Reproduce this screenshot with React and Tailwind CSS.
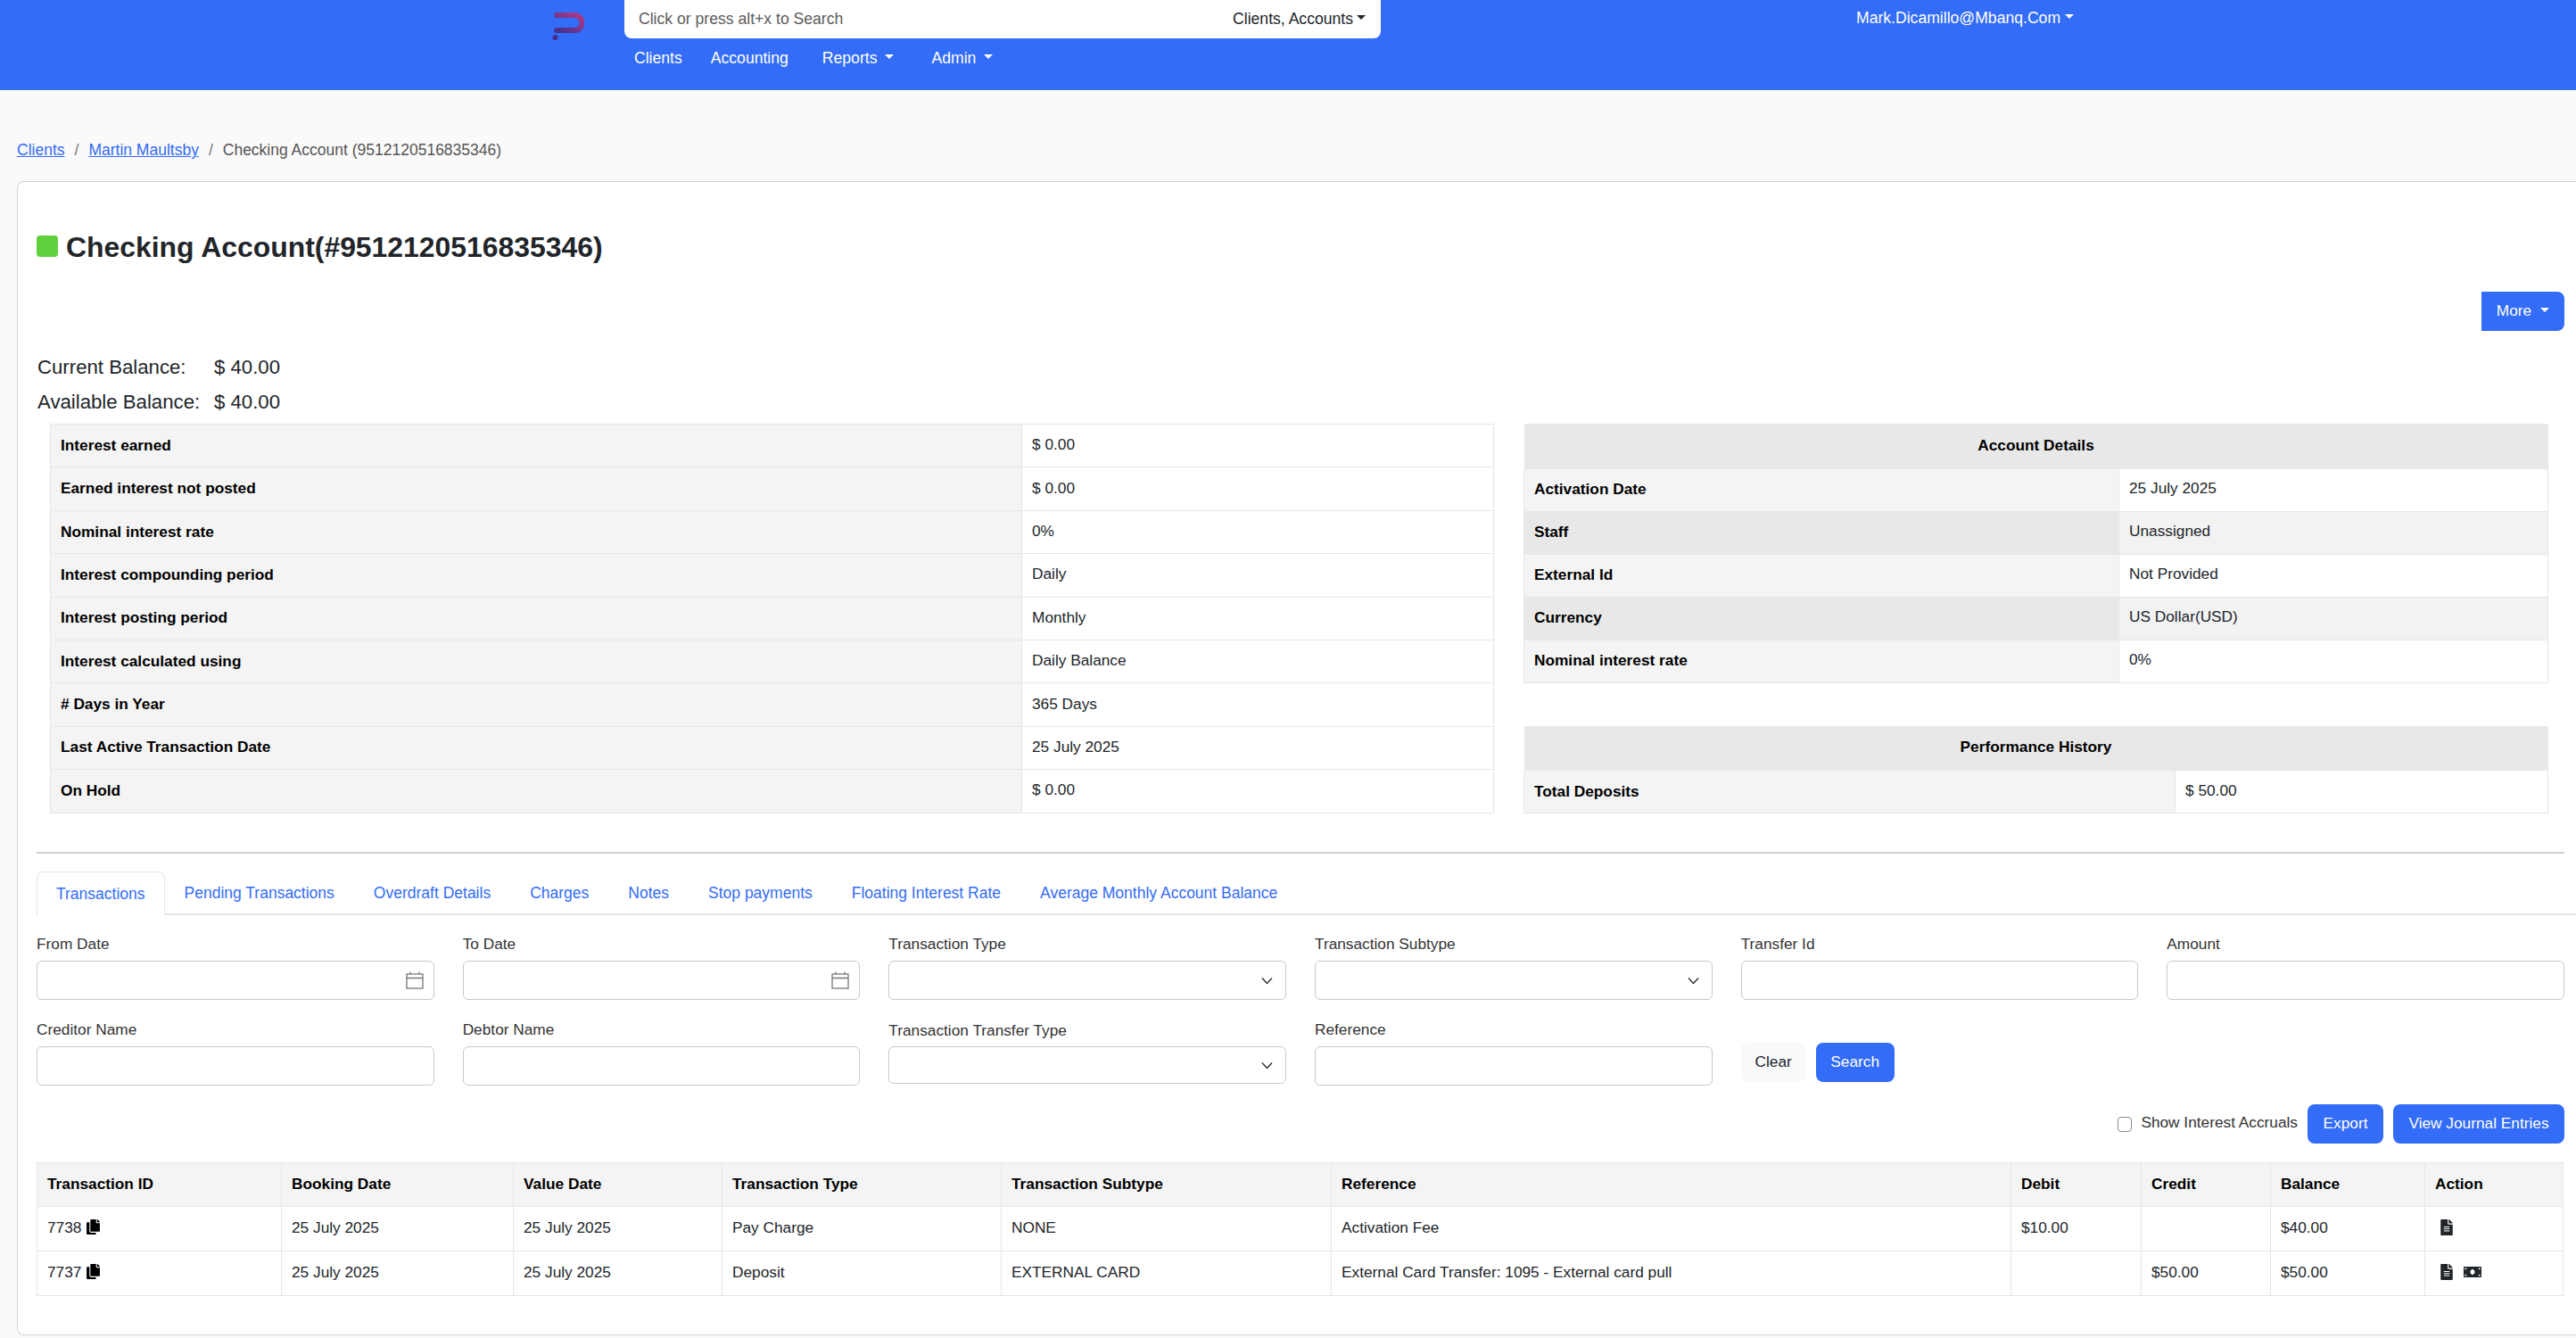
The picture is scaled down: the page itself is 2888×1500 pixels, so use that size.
import React from "react";
import { FaCopy, FaFileAlt, FaMoneyBill } from "react-icons/fa";

const Caret = ({ className = "" }) => (
  <span
    className={`inline-block w-0 h-0 border-t-[5px] border-x-[5px] border-x-transparent border-t-current ${className}`}
  />
);

const Logo = () => (
  <svg width="36" height="48" viewBox="0 0 36 48" className="mt-[11px] shrink-0">
    <defs>
      <linearGradient id="logoGrad" x1="1" y1="0" x2="0" y2="1">
        <stop offset="0" stopColor="#b03a86" />
        <stop offset="1" stopColor="#44308f" />
      </linearGradient>
    </defs>
    <path
      d="M5 6 H25 a8.500 8.500 0 0 1 0 17 H5"
      fill="none"
      stroke="url(#logoGrad)"
      strokeWidth="6"
      strokeLinecap="round"
    />
    <circle cx="3.500" cy="31" r="3" fill="#4a2a86" />
  </svg>
);

const CalendarIcon = () => (
  <svg width="20" height="20" viewBox="0 0 20 20" fill="none" stroke="#777" strokeWidth="1.300">
    <rect x="1" y="3" width="18" height="16" />
    <path d="M1 7.500 H19 M5 0.500 V3 M15 0.500 V3" />
  </svg>
);

const Chevron = () => (
  <svg width="13" height="9" viewBox="0 0 13 9" fill="none" stroke="#333" strokeWidth="1.500">
    <path d="M1 1.500 L6.500 7.500 L12 1.500" />
  </svg>
);

const accountRows = [
  ["Interest earned", "$ 0.00"],
  ["Earned interest not posted", "$ 0.00"],
  ["Nominal interest rate", "0%"],
  ["Interest compounding period", "Daily"],
  ["Interest posting period", "Monthly"],
  ["Interest calculated using", "Daily Balance"],
  ["# Days in Year", "365 Days"],
  ["Last Active Transaction Date", "25 July 2025"],
  ["On Hold", "$ 0.00"],
];

const detailRows = [
  ["Activation Date", "25 July 2025"],
  ["Staff", "Unassigned"],
  ["External Id", "Not Provided"],
  ["Currency", "US Dollar(USD)"],
  ["Nominal interest rate", "0%"],
];

const tabs = [
  "Transactions",
  "Pending Transactions",
  "Overdraft Details",
  "Charges",
  "Notes",
  "Stop payments",
  "Floating Interest Rate",
  "Average Monthly Account Balance",
];

const columns = [
  ["Transaction ID", "w-[274px]"],
  ["Booking Date", "w-[260px]"],
  ["Value Date", "w-[234px]"],
  ["Transaction Type", "w-[313px]"],
  ["Transaction Subtype", "w-[370px]"],
  ["Reference", "w-[762px]"],
  ["Debit", "w-[146px]"],
  ["Credit", "w-[145px]"],
  ["Balance", "w-[173px]"],
  ["Action", "w-[155px]"],
];

const transactions = [
  ["7738", "25 July 2025", "25 July 2025", "Pay Charge", "NONE", "Activation Fee", "$10.00", "", "$40.00", false],
  ["7737", "25 July 2025", "25 July 2025", "Deposit", "EXTERNAL CARD", "External Card Transfer: 1095 - External card pull", "", "$50.00", "$50.00", true],
];

const inputClass = "w-full h-11 rounded-md border border-[#c9c9c9] bg-white flex items-center justify-end";

const Field = ({ label, labelClass = "", boxClass = "", children }) => (
  <div>
    <div className={`h-6 leading-6 text-[#333] mb-[7px] ${labelClass}`}>{label}</div>
    <div className={`${inputClass} ${boxClass}`}>{children}</div>
  </div>
);

const App = () => {
  return (
    <div className="min-h-screen bg-[#fafafa] text-[17.28px] text-[#212529] font-['Liberation_Sans',Arial,sans-serif]">
      <header className="h-[101px] bg-[#336cf6] flex pl-[619px] text-white text-[17.6px]">
        <Logo />
        <div className="ml-[45px] w-[848px]">
          <div className="h-[43px] bg-white rounded-b-lg flex items-center justify-between pl-4 pr-[17px]">
            <span className="text-[#5c5c5c] -mt-px">Click or press alt+x to Search</span>
            <span className="flex items-center text-[#212529] -mt-px">
              Clients, Accounts
              <Caret className="ml-1 -mt-[3px]" />
            </span>
          </div>
          <nav className="flex items-center mt-[10px] h-6 pl-[11px]">
            <a>Clients</a>
            <a className="ml-[32px]">Accounting</a>
            <a className="ml-[38px] flex items-center">
              Reports
              <Caret className="ml-[9px] -mt-[3px]" />
            </a>
            <a className="ml-[42px] flex items-center">
              Admin
              <Caret className="ml-[9px] -mt-[3px]" />
            </a>
          </nav>
        </div>
        <div className="ml-[533px] h-10 flex items-center">
          Mark.Dicamillo@Mbanq.Com
          <Caret className="ml-[5px] -mt-[3px]" />
        </div>
      </header>

      <div className="pt-[55px] pl-[19px] h-[102px] leading-6 text-[17.5px]">
        <a className="text-[#336cf6] underline">Clients</a>
        <span className="mx-[11px] text-[#6c757d]">/</span>
        <a className="text-[#336cf6] underline">Martin Maultsby</a>
        <span className="mx-[11px] text-[#6c757d]">/</span>
        <span className="text-[#555]">Checking Account (9512120516835346)</span>
      </div>

      <main className="ml-[19px] bg-white border border-r-0 border-[#d4d4d4] rounded-l-lg pt-[60px] pl-[21px] pr-[13px] pb-[43px]">
        <div className="flex items-center h-6">
          <span className="w-6 h-6 rounded bg-[#5fd13d]" />
          <h1 className="ml-[9px] text-[31.9px] leading-[25px] pt-[3px] font-bold">Checking Account(#9512120516835346)</h1>
        </div>

        <div className="flex justify-end mt-[39px]">
          <button className="w-[93px] h-11 bg-[#336cf6] text-white rounded-r-lg flex items-center justify-center">
            More
            <Caret className="ml-[10px] -mt-[3px]" />
          </button>
        </div>

        <div className="mt-[21px] ml-px text-[22.2px] leading-[39px]">
          <div className="flex">
            <span className="w-[198px]">Current Balance:</span>
            <span>$ 40.00</span>
          </div>
          <div className="flex">
            <span className="w-[198px]">Available Balance:</span>
            <span>$ 40.00</span>
          </div>
        </div>

        <div className="flex mt-[5px] ml-[15px]">
          <table className="table-fixed border-collapse w-[1619px] h-[436px] shrink-0">
            <tbody>
              {accountRows.map(([label, value]) => (
                <tr key={label} className="h-[48.4px] border border-[#e6e6e6]">
                  <th className="w-[1089px] bg-[#f4f4f4] text-left font-bold pl-[11px] text-black">{label}</th>
                  <td className="pl-[11px] pb-px border-l border-[#e6e6e6]">{value}</td>
                </tr>
              ))}
            </tbody>
          </table>

          <div className="ml-[33px] w-[1149px] shrink-0">
            <table className="table-fixed border-collapse w-full h-[290px]">
              <colgroup>
                <col className="w-[667px]" />
                <col />
              </colgroup>
              <tbody>
                <tr className="h-[50px]">
                  <th colSpan={2} className="bg-[#e8e8e8] font-bold text-black">Account Details</th>
                </tr>
                {detailRows.map(([label, value], i) => (
                  <tr key={label} className="h-[48px] border border-[#e6e6e6]">
                    <th className={`text-left font-bold pl-[11px] text-black ${i % 2 ? "bg-[#e8e8e8]" : "bg-[#f4f4f4]"}`}>
                      {label}
                    </th>
                    <td className={`pl-[11px] pb-[2px] border-l border-[#e6e6e6] ${i % 2 ? "bg-[#f2f2f2]" : "bg-white"}`}>{value}</td>
                  </tr>
                ))}
              </tbody>
            </table>

            <table className="table-fixed border-collapse w-full h-[98px] mt-[48px]">
              <colgroup>
                <col className="w-[730px]" />
                <col />
              </colgroup>
              <tbody>
                <tr className="h-[50px]">
                  <th colSpan={2} className="bg-[#e8e8e8] font-bold text-black">Performance History</th>
                </tr>
                <tr className="h-[48px] border border-[#e6e6e6]">
                  <th className="bg-[#f4f4f4] text-left font-bold pl-[11px] text-black">Total Deposits</th>
                  <td className="pl-[11px] pb-[2px] border-l border-[#e6e6e6]">$ 50.00</td>
                </tr>
              </tbody>
            </table>
          </div>
        </div>

        <div className="mt-[43px] h-[2px] bg-[#cfcfcf]" />

        <div className="mt-5 flex h-[49px] border-b-2 border-[#e6e6e6] -mr-[13px] text-[#336cf6] text-[17.5px]">
          {tabs.map((tab, i) => (
            <a
              key={tab}
              className={
                i === 0
                  ? "px-[21px] pt-[11px] h-[49px] bg-white border border-b-0 border-[#e6e6e6] rounded-t-lg"
                  : "px-[22px] pt-[11px]"
              }
            >
              {tab}
            </a>
          ))}
        </div>

        <div className="mt-5 grid grid-cols-6 gap-x-8 gap-y-[21px]">
          <Field label="From Date" boxClass="pr-[11px]"><CalendarIcon /></Field>
          <Field label="To Date" boxClass="pr-[11px]"><CalendarIcon /></Field>
          <Field label="Transaction Type" boxClass="pr-[14px]"><Chevron /></Field>
          <Field label="Transaction Subtype" boxClass="pr-[14px]"><Chevron /></Field>
          <Field label="Transfer Id" />
          <Field label="Amount" />
          <Field label="Creditor Name" />
          <Field label="Debtor Name" />
          <Field label="Transaction Transfer Type" labelClass="pt-px" boxClass="pr-[14px] h-[42px]"><Chevron /></Field>
          <Field label="Reference" />
          <div className="flex items-start gap-[11px] pt-[27px]">
            <button className="w-[73px] h-11 bg-[#f8f9fa] rounded-lg">Clear</button>
            <button className="w-[88px] h-11 bg-[#336cf6] text-white rounded-lg">Search</button>
          </div>
        </div>

        <div className="mt-[21px] flex justify-end items-center">
          <span className="w-4 h-[17px] rounded-[4px] border border-[#8a8a8a] bg-white -ml-px" />
          <span className="ml-[10px] pb-[3px] text-[#333]">Show Interest Accruals</span>
          <button className="ml-[11px] w-[85px] h-11 bg-[#336cf6] text-white rounded-lg">Export</button>
          <button className="ml-[11px] w-[192px] h-11 bg-[#336cf6] text-white rounded-lg">View Journal Entries</button>
        </div>

        <table className="mt-[21px] table-fixed border-collapse w-[2832px]">
          <thead>
            <tr className="h-[49px] bg-[#f4f4f4] border border-[#e6e6e6]">
              {columns.map(([name, width]) => (
                <th key={name} className={`${width} text-left font-bold pl-[11px] text-black border-l border-[#e6e6e6]`}>
                  {name}
                </th>
              ))}
            </tr>
          </thead>
          <tbody>
            {transactions.map((row) => (
              <tr key={row[0]} className="h-[50px] border border-[#e6e6e6]">
                <td className="pl-[11px] pb-px">
                  <span className="flex items-center gap-[5px]">
                    {row[0]}
                    <FaCopy className="text-[17px] text-black -mt-[2px]" />
                  </span>
                </td>
                {row.slice(1, 9).map((cell, i) => (
                  <td key={i} className="pl-[11px] pb-px border-l border-[#e6e6e6]">{cell}</td>
                ))}
                <td className="pl-[15px] pb-px border-l border-[#e6e6e6]">
                  <span className="flex items-center gap-[10px] text-[#212529]">
                    <FaFileAlt className="text-[18px] -mt-[2px]" />
                    {row[9] && <FaMoneyBill className="text-[20px] -mt-[2px]" />}
                  </span>
                </td>
              </tr>
            ))}
          </tbody>
        </table>
      </main>
    </div>
  );
};

export default App;
